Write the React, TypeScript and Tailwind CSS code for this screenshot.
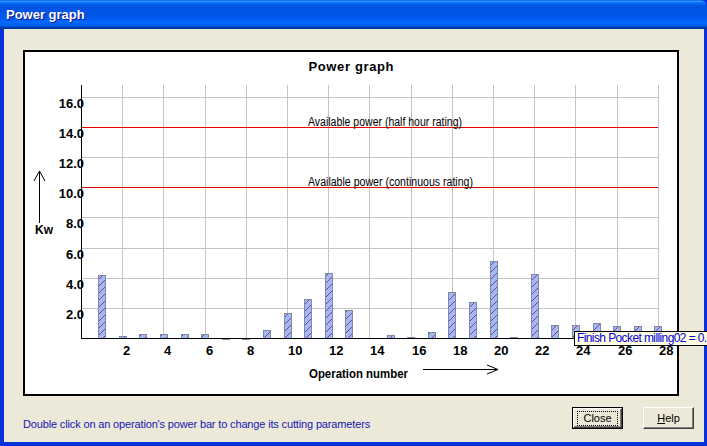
const ops = [
  4.2, 0.15, 0.24, 0.24, 0.24, 0.24, 0.03, 0.03, 0.55, 1.67, 2.6, 4.3, 1.87, 0,
  0.18, 0.04, 0.4, 3.05, 2.4, 5.13, 0.05, 4.27, 0.85, 0.85, 1.0, 0.78, 0.78, 0.78,
];

const y0 = 338;
const kw = (v: number) => y0 - 15.07 * v;
const gx = (k: number) => Math.round(81 + 41.2 * k) + 0.5;

function PowerChart() {
  const hLines = [2, 4, 6, 8, 12, 16];
  const yLabels = [2, 4, 6, 8, 10, 12, 14, 16];
  return (
    <svg
      className="block h-full w-full"
      viewBox="25 52 652 342"
      style={{ fontFamily: '"Liberation Sans", Arial, sans-serif' }}
    >
      <defs>
        <pattern id="hatch" width="7" height="7" patternUnits="userSpaceOnUse">
          <rect width="7" height="7" fill="#a3baee" />
          <path d="M-1,1 L1,-1 M0,7 L7,0 M6,8 L8,6" stroke="#8a3aa8" strokeWidth="1" />
        </pattern>
      </defs>

      <text x="351" y="71" textAnchor="middle" fontSize="13" fontWeight="bold" textLength="85">
        Power graph
      </text>

      {/* grid */}
      {Array.from({ length: 14 }, (_, i) => (
        <line key={i} x1={gx(i + 1)} x2={gx(i + 1)} y1={85} y2={y0} stroke="#c4c4c4" />
      ))}
      {hLines.map((v) => (
        <line key={v} x1={81} x2={658} y1={Math.round(kw(v)) + 0.5} y2={Math.round(kw(v)) + 0.5} stroke="#c4c4c4" />
      ))}

      {/* power limits */}
      <rect x={82} y={127} width={576} height={1} fill="#e00000" />
      <rect x={82} y={187} width={576} height={1} fill="#e00000" />

      <text x="308" y="126" fontSize="12" textLength="154" lengthAdjust="spacingAndGlyphs">
        Available power (half hour rating)
      </text>
      <text x="308" y="186" fontSize="12" textLength="165" lengthAdjust="spacingAndGlyphs">
        Available power (continuous rating)
      </text>

      {/* bars */}
      {ops.map((v, i) => {
        if (v <= 0) return null;
        const cx = 81 + 20.6 * (i + 1);
        const top = kw(v);
        return (
          <rect
            key={i}
            x={Math.round(cx - 3.5) + 0.5}
            y={Math.round(top) + 0.5}
            width={7}
            height={Math.max(1, y0 - Math.round(top))}
            fill="url(#hatch)"
            stroke="#7d8aa6"
          />
        );
      })}

      {/* axes */}
      <line x1={81.5} x2={81.5} y1={85} y2={y0 + 0.5} stroke="#000" />
      <line x1={81} x2={658} y1={y0 + 0.5} y2={y0 + 0.5} stroke="#000" />

      {yLabels.map((v) => (
        <text key={v} x="84" y={Math.round(kw(v)) + 11} textAnchor="end" fontSize="13" fontWeight="bold">
          {v.toFixed(1)}
        </text>
      ))}
      {Array.from({ length: 14 }, (_, i) => (
        <text key={i} x={gx(i + 1) + 0.5} y="355" fontSize="13" fontWeight="bold">
          {(i + 1) * 2}
        </text>
      ))}

      {/* Kw arrow */}
      <path d="M39.5,171 L39.5,223 M39.5,171 L34,181 M39.5,171 L45,181" stroke="#000" fill="none" />
      <text x="35" y="234" fontSize="12" fontWeight="bold">Kw</text>

      <text x="309" y="378" fontSize="13" fontWeight="bold" textLength="99" lengthAdjust="spacingAndGlyphs">
        Operation number
      </text>
      <path d="M423,369.5 L498,369.5 M498,369.5 L487,365 M498,369.5 L487,374" stroke="#000" fill="none" />
    </svg>
  );
}

function Button({ label, focused }: { label: React.ReactNode; focused?: boolean }) {
  if (focused) {
    return (
      <div className="h-[22px] w-[51px] border border-black">
        <div className="flex h-full w-full items-center justify-center border border-t-white border-l-white border-r-[#404040] border-b-[#404040] shadow-[inset_-1px_-1px_0_#808080]">
          <span className="border border-dotted border-black px-[5px] leading-[13px]">{label}</span>
        </div>
      </div>
    );
  }
  return (
    <div className="flex h-[22px] w-[51px] items-center justify-center border border-t-white border-l-white border-r-[#404040] border-b-[#404040] shadow-[inset_-1px_-1px_0_#808080]">
      <span className="leading-[13px]">{label}</span>
    </div>
  );
}

export default function App() {
  return (
    <div
      className="relative flex h-[446px] w-[707px] flex-col overflow-hidden bg-[#0831d9] text-[11px] text-black"
      style={{ fontFamily: '"Liberation Sans", Arial, sans-serif' }}
    >
      <div className="flex h-[29px] shrink-0 items-center rounded-tr-[7px] bg-[linear-gradient(to_bottom,#0058ee_0%,#3593ff_4%,#288eff_6%,#127dff_8%,#036ffc_10%,#0262ee_14%,#0057e5_20%,#0054e3_24%,#0055eb_56%,#005bf5_66%,#026afe_76%,#0062ef_86%,#0052d6_92%,#0040ab_94%,#003092_100%)] pl-[6px]">
        <span className="text-[13px] font-bold text-white [text-shadow:1px_1px_#0f1089]">Power graph</span>
      </div>

      <div className="mb-[4px] ml-[4px] mr-[3px] flex flex-1 flex-col bg-[#ece9d8] pl-[19px] pt-[21px]">
        <div className="h-[346px] w-[656px] border-2 border-black bg-white">
          <PowerChart />
        </div>

        <div className="mt-[11px] flex items-start pr-[10px]">
          <span className="mt-[9px] text-[11px] tracking-[-0.15px] text-[#1616b4]">
            Double click on an operation's power bar to change its cutting parameters
          </span>
          <div className="ml-auto flex gap-[20px]">
            <Button label="Close" focused />
            <Button
              label={
                <>
                  <span className="underline">H</span>elp
                </>
              }
            />
          </div>
        </div>
      </div>

      <div className="absolute left-[574px] top-[331px] h-[15px] w-[140px] whitespace-nowrap border border-black bg-[#ffffe1] pl-[2px] text-[12px] leading-[13px] tracking-[-0.6px] text-[#0000e0]">
        Finish Pocket milling02 = 0.9
      </div>
    </div>
  );
}
